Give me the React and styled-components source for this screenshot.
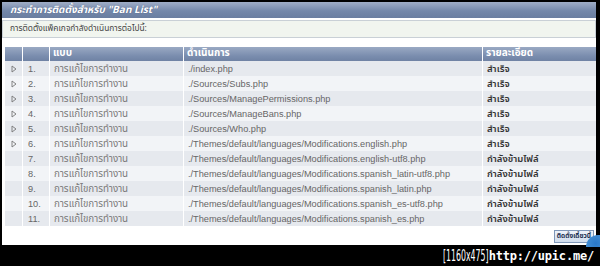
import React from "react";
import styled, { createGlobalStyle } from "styled-components";

const Global = createGlobalStyle`
  html, body { margin: 0; padding: 0; background: #000; }
  body { width: 600px; height: 266px; overflow: hidden; }
`;

const thai = `Tahoma, "Noto Sans Thai", "DejaVu Sans", "Noto Sans", sans-serif`;
const latin = `"Liberation Sans", Arial, sans-serif`;

const Frame = styled.div`
  width: 600px;
  height: 266px;
  background: #000;
  padding: 2px 4px 0 2px;
  box-sizing: border-box;
  display: flex;
  flex-direction: column;
`;

const Panel = styled.div`
  position: relative;
  background: #fff;
  height: 243px;
  display: flex;
  flex-direction: column;
  font-family: ${thai};
`;

const TitleBar = styled.div`
  height: 16px;
  background: linear-gradient(#9fadc6, #7488aa 55%, #6a7ea0);
  color: #fff;
  font-weight: bold;
  font-style: italic;
  font-size: 10px;
  line-height: 16px;
  padding-left: 8px;
  text-shadow: 0 0 1px #44557a;
`;

const InfoBox = styled.div`
  margin-top: 2px;
  height: 16px;
  border: 1px solid #c9d0d6;
  background: #f1f5ef;
  color: #444;
  font-size: 8.4px;
  line-height: 16px;
  padding-left: 7px;
`;

const Table = styled.div`
  margin: 9px 0 0 3px;
  display: flex;
  flex-direction: column;
`;

const Row = styled.div`
  display: grid;
  grid-template-columns: 17px 26px 133px 298px 1fr;
  column-gap: 1px;
  height: ${(p) => (p.$head ? 14 : 15)}px;
`;

const HeadCell = styled.div`
  box-sizing: border-box;
  background: linear-gradient(#9aa9c3, #7a8dae 60%, #6d80a2);
  color: #fff;
  font-weight: bold;
  font-size: 10px;
  line-height: 12px;
  padding: 0 0 3px 3px;
  white-space: nowrap;
  display: flex;
  align-items: center;
`;

const Cell = styled.div`
  box-sizing: border-box;
  background: ${(p) => (p.$alt ? "#e6e9ee" : "#f2f4f7")};
  color: ${(p) => (p.$strong ? "#333" : p.$mono ? "#666" : "#7a7a7a")};
  font-size: ${(p) => (p.$mono ? "9.2px" : p.$strong ? "9.5px" : "9.8px")};
  font-family: ${(p) => (p.$mono ? latin : thai)};
  font-weight: ${(p) => (p.$strong ? 600 : "normal")};
  line-height: 13px;
  padding: 1px 0 0 ${(p) => p.$pad ?? 4}px;
  white-space: nowrap;
  overflow: hidden;
  display: flex;
  align-items: center;
`;

const Arrow = styled.svg`
  width: 6px;
  height: 8px;
  margin-left: 6px;
`;

const ButtonBar = styled.div`
  display: flex;
  justify-content: flex-end;
  padding: 4px 2px 0 0;
`;

const Button = styled.div`
  font-size: 6.5px;
  font-weight: bold;
  color: #1d3050;
  background: linear-gradient(#eef3fa, #cfdcec);
  border: 1px solid #7f97b8;
  padding: 0 2px;
  height: 11px;
  line-height: 11px;
`;

const Blob = styled.div`
  position: absolute;
  right: -4px;
  bottom: -2px;
  width: 14px;
  height: 12px;
  border-radius: 12px 0 0 0;
  background: radial-gradient(circle at 70% 70%, #2a78c8, #4a95d8);
`;

const Footer = styled.div`
  flex: 1;
  display: flex;
  justify-content: flex-end;
  align-items: center;
  padding-right: 2px;
  color: #fff;
  font-size: 15px;
  line-height: 18px;
`;

const Dim = styled.span`
  font-family: "DejaVu Sans Condensed", "DejaVu Sans", sans-serif;
  display: inline-block;
  transform: scaleX(0.58);
  transform-origin: right center;
  margin-left: -40px;
`;

const Url = styled.span`
  font-family: "DejaVu Sans Mono", monospace;
  font-weight: bold;
  font-size: 12px;
  letter-spacing: -0.2px;
`;

const rows = [
  ["./index.php", "สำเร็จ", true],
  ["./Sources/Subs.php", "สำเร็จ", true],
  ["./Sources/ManagePermissions.php", "สำเร็จ", true],
  ["./Sources/ManageBans.php", "สำเร็จ", true],
  ["./Sources/Who.php", "สำเร็จ", true],
  ["./Themes/default/languages/Modifications.english.php", "สำเร็จ", true],
  ["./Themes/default/languages/Modifications.english-utf8.php", "กำลังข้ามไฟล์", false],
  ["./Themes/default/languages/Modifications.spanish_latin-utf8.php", "กำลังข้ามไฟล์", false],
  ["./Themes/default/languages/Modifications.spanish_latin.php", "กำลังข้ามไฟล์", false],
  ["./Themes/default/languages/Modifications.spanish_es-utf8.php", "กำลังข้ามไฟล์", false],
  ["./Themes/default/languages/Modifications.spanish_es.php", "กำลังข้ามไฟล์", false],
];

export default function App() {
  return (
    <>
      <Global />
      <Frame>
        <Panel>
          <TitleBar>กระทำการติดตั้งสำหรับ "Ban List"</TitleBar>
          <InfoBox>การติดตั้งแพ็คเกจกำลังดำเนินการต่อไปนี้:</InfoBox>
          <Table>
            <Row $head>
              <HeadCell />
              <HeadCell />
              <HeadCell>แบบ</HeadCell>
              <HeadCell>ดำเนินการ</HeadCell>
              <HeadCell>รายละเอียด</HeadCell>
            </Row>
            {rows.map(([path, status, arrow], i) => {
              const alt = i % 2 === 0;
              return (
                <Row key={i}>
                  <Cell $alt={alt} $pad={0}>
                    {arrow && (
                      <Arrow viewBox="0 0 6 8">
                        <path d="M1 1 L5 4 L1 7 Z" fill="none" stroke="#777" strokeWidth="0.9" />
                      </Arrow>
                    )}
                  </Cell>
                  <Cell $alt={alt} $mono $pad={5}>{i + 1}.</Cell>
                  <Cell $alt={alt}>การแก้ไขการทำงาน</Cell>
                  <Cell $alt={alt} $mono>{path}</Cell>
                  <Cell $alt={alt} $strong>{status}</Cell>
                </Row>
              );
            })}
          </Table>
          <ButtonBar>
            <Button>ติดตั้งเดี๋ยวนี้</Button>
          </ButtonBar>
          <Blob />
        </Panel>
        <Footer>
          <Dim>[1160x475]</Dim>
          <Url>http://upic.me/</Url>
        </Footer>
      </Frame>
    </>
  );
}
